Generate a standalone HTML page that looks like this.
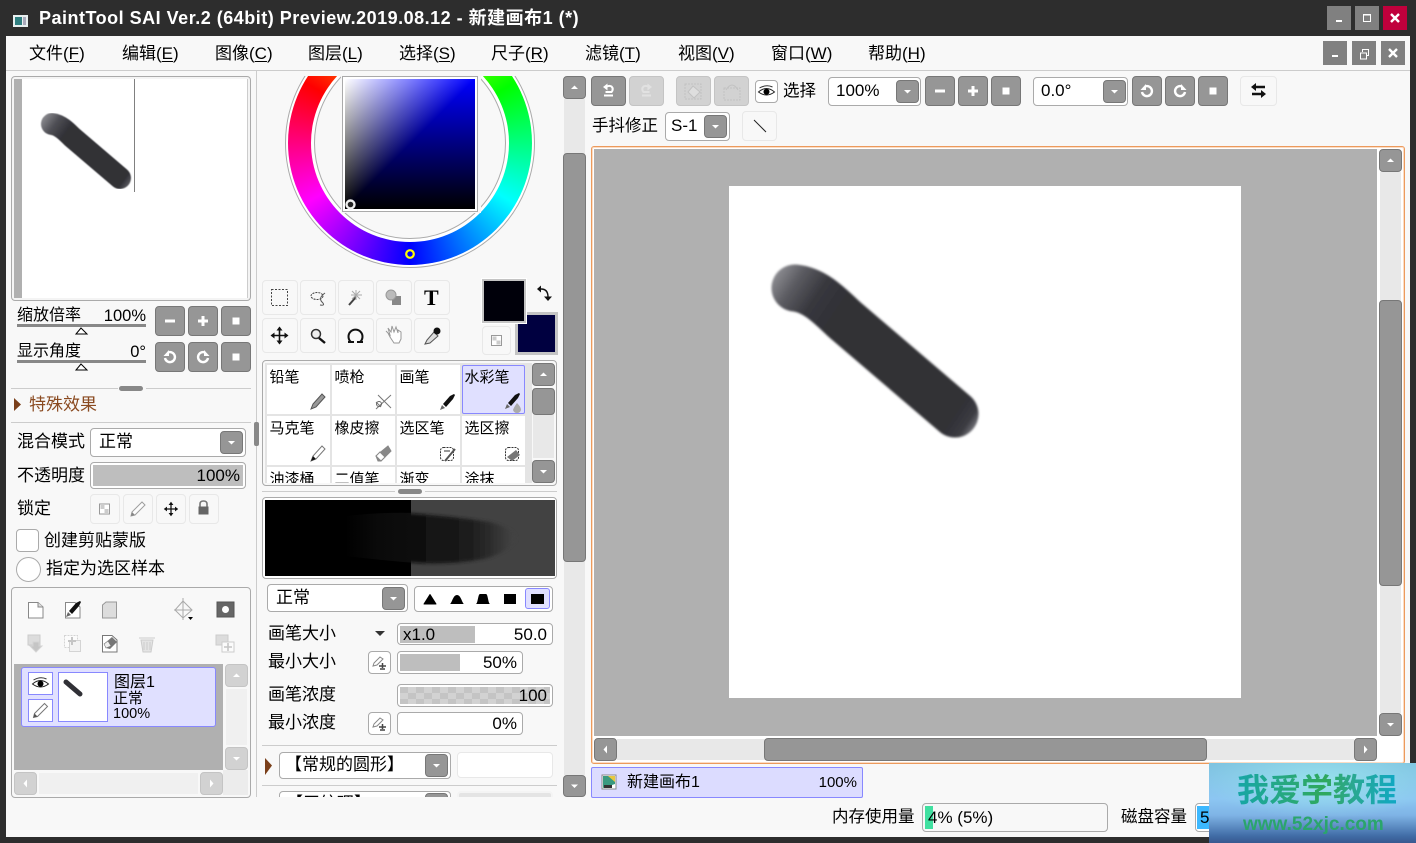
<!DOCTYPE html>
<html lang="zh"><head><meta charset="utf-8"><title>PaintTool SAI</title>
<style>
html,body{margin:0;padding:0;width:1416px;height:843px;overflow:hidden;background:#2d2d2d}
body{position:relative;font-family:"Liberation Sans","Noto Sans CJK SC",sans-serif;font-size:17px;color:#000}
div,span.t{position:absolute;box-sizing:border-box}
.t{white-space:nowrap;line-height:20px;height:20px;margin-top:1px}
.m{top:43px;font-size:17px}
.m u{text-underline-offset:2px}
.b{background:#969696;border:1px solid #777;border-radius:4px}
.d{background:#d2d2d2;border:1px solid #c4c4c4;border-radius:4px}
.l{background:#f8f8f8;border:1px solid #e8e8e8;border-radius:4px}
.f{background:#fff;border:1px solid #aaa;border-radius:4px}
.tr{background:#e8e8e8}
.h{background:#ccc;height:1px}
.c{background:#fff}
.c span{position:absolute;left:2.5px;top:3px;font-size:15px;line-height:20px;white-space:nowrap}
.w{background:#808080}
#ic{position:absolute;left:0;top:0;width:1416px;height:843px;z-index:5;pointer-events:none}
</style></head><body>

<div style="left:6px;top:36px;width:1404px;height:801px;background:#f8f8f8"></div>

<!-- title -->
<span class="t" style="left:39px;top:7px;color:#fff;font-weight:bold;font-size:18px;letter-spacing:.5px">PaintTool SAI Ver.2 (64bit) Preview.2019.08.12 - 新建画布1 (*)</span>
<div class="w" style="left:1327px;top:6px;width:24px;height:24px"></div>
<div class="w" style="left:1355px;top:6px;width:24px;height:24px"></div>
<div style="left:1383px;top:6px;width:24px;height:24px;background:#c0003c"></div>

<!-- menu -->
<span class="t m" style="left:29px">文件(<u>F</u>)</span>
<span class="t m" style="left:122px">编辑(<u>E</u>)</span>
<span class="t m" style="left:215px">图像(<u>C</u>)</span>
<span class="t m" style="left:308px">图层(<u>L</u>)</span>
<span class="t m" style="left:399px">选择(<u>S</u>)</span>
<span class="t m" style="left:491px">尺子(<u>R</u>)</span>
<span class="t m" style="left:585px">滤镜(<u>T</u>)</span>
<span class="t m" style="left:678px">视图(<u>V</u>)</span>
<span class="t m" style="left:771px">窗口(<u>W</u>)</span>
<span class="t m" style="left:868px">帮助(<u>H</u>)</span>
<div class="w" style="left:1323px;top:41px;width:24px;height:24px"></div>
<div class="w" style="left:1352px;top:41px;width:24px;height:24px"></div>
<div class="w" style="left:1381px;top:41px;width:24px;height:24px"></div>
<div class="h" style="left:6px;top:70px;width:1404px;height:1px"></div>
<div style="left:256px;top:71px;width:1px;height:726px;background:#ccc"></div>
<div style="left:254px;top:422px;width:5px;height:24px;background:#888;border-radius:2px"></div>

<!-- navigator -->
<div style="left:11px;top:76px;width:240px;height:225px;background:#fff;border:1px solid #aaa;border-radius:4px;box-shadow:inset 0 0 0 2px #f4f4f4"></div>
<div style="left:14px;top:79px;width:8px;height:219px;background:#b0b0b0"></div>
<div style="left:134px;top:79px;width:1px;height:113px;background:#808080"></div>
<div style="left:247px;top:79px;width:1px;height:219px;background:#ccc"></div>

<span class="t" style="left:17px;top:305px;font-size:16px">缩放倍率</span>
<span class="t" style="right:1270px;top:305px;font-size:16.5px">100%</span>
<div style="left:17px;top:324px;width:129px;height:3px;background:#888"></div>
<span class="t" style="left:17px;top:341px;font-size:16px">显示角度</span>
<span class="t" style="right:1270px;top:341px;font-size:16.5px">0°</span>
<div style="left:17px;top:360px;width:129px;height:3px;background:#888"></div>

<div class="b" style="left:155px;top:306px;width:30px;height:30px"></div>
<div class="b" style="left:188px;top:306px;width:30px;height:30px"></div>
<div class="b" style="left:221px;top:306px;width:30px;height:30px"></div>
<div class="b" style="left:155px;top:342px;width:30px;height:30px"></div>
<div class="b" style="left:188px;top:342px;width:30px;height:30px"></div>
<div class="b" style="left:221px;top:342px;width:30px;height:30px"></div>

<div class="h" style="left:11px;top:388px;width:107px"></div>
<div class="h" style="left:146px;top:388px;width:105px"></div>
<div style="left:119px;top:386px;width:24px;height:5px;background:#888;border-radius:3px"></div>
<span class="t" style="left:29px;top:394px;color:#8a4a20">特殊效果</span>
<div class="h" style="left:11px;top:422px;width:240px"></div>

<span class="t" style="left:17px;top:431px">混合模式</span>
<div class="f" style="left:90px;top:428px;width:156px;height:29px"></div>
<span class="t" style="left:99px;top:431px">正常</span>
<div class="b" style="left:220px;top:431px;width:23px;height:23px"></div>

<span class="t" style="left:17px;top:465px">不透明度</span>
<div class="f" style="left:90px;top:462px;width:156px;height:27px"></div>
<div style="left:93px;top:465px;width:150px;height:21px;background:#bebebe"></div>
<span class="t" style="right:1176px;top:465px">100%</span>

<span class="t" style="left:17px;top:498px">锁定</span>
<div class="l" style="left:90px;top:494px;width:30px;height:30px"></div>
<div class="l" style="left:123px;top:494px;width:30px;height:30px"></div>
<div class="l" style="left:156px;top:494px;width:30px;height:30px"></div>
<div class="l" style="left:189px;top:494px;width:30px;height:30px"></div>

<div class="f" style="left:16px;top:529px;width:23px;height:23px"></div>
<span class="t" style="left:44px;top:530px">创建剪贴蒙版</span>
<div class="f" style="left:16px;top:557px;width:25px;height:25px;border-radius:50%"></div>
<span class="t" style="left:46px;top:558px">指定为选区样本</span>

<!-- layer panel -->
<div style="left:11px;top:587px;width:240px;height:211px;border:1px solid #aaa;border-radius:4px"></div>
<div style="left:14px;top:664px;width:209px;height:106px;background:#b0b0b0"></div>
<div style="left:21px;top:667px;width:195px;height:60px;background:#e0e0ff;border:1px solid #8888ff;border-radius:3px"></div>
<div style="left:28px;top:672px;width:25px;height:23px;background:#fff;border:1px solid #8888ff"></div>
<div style="left:28px;top:699px;width:25px;height:23px;background:#fff;border:1px solid #8888ff"></div>
<div style="left:58px;top:672px;width:50px;height:50px;background:#fff;border:1px solid #8888ff"></div>
<span class="t" style="left:114px;top:672px;font-size:16px">图层1</span>
<span class="t" style="left:113px;top:688px;font-size:15px">正常</span>
<span class="t" style="left:113px;top:703px;font-size:14.5px">100%</span>
<div class="d" style="left:225px;top:664px;width:23px;height:23px"></div>
<div style="left:226px;top:689px;width:21px;height:56px;background:#f0f0f0"></div>
<div class="d" style="left:225px;top:747px;width:23px;height:23px"></div>
<div class="d" style="left:14px;top:772px;width:23px;height:23px"></div>
<div style="left:39px;top:773px;width:159px;height:21px;background:#f0f0f0"></div>
<div class="d" style="left:200px;top:772px;width:23px;height:23px"></div>
<div style="left:223px;top:770px;width:25px;height:25px;background:#ececec"></div>

<!-- colour wheel -->
<div style="left:260px;top:76px;width:300px;height:200px;overflow:hidden">
  <div style="left:25px;top:-58px;width:250px;height:250px;border-radius:50%;border:1px solid #aaa;background:#fff"></div>
  <div style="left:28px;top:-55px;width:244px;height:244px;border-radius:50%;background:conic-gradient(#ff0 0deg,#0f0 60deg,#0ff 120deg,#00f 180deg,#f0f 240deg,#f00 300deg,#ff0 360deg)"></div>
  <div style="left:53px;top:-30px;width:194px;height:194px;border-radius:50%;background:#fff;box-shadow:0 0 0 2px #fff"></div>
  <div style="left:54px;top:-29px;width:192px;height:192px;border-radius:50%;background:#f8f8f8;border:1px solid #aaa"></div>
  <div style="left:81px;top:-2px;width:140px;height:139px;background:#f8f8f8"></div>
</div>
<div style="left:342px;top:76px;width:136px;height:136px;background:#fff;border:1px solid #aaa"></div>
<div style="left:345px;top:79px;width:130px;height:130px;background:linear-gradient(135deg,#fff 0,#000 50%),linear-gradient(to bottom,#00f,#000);background-blend-mode:lighten"></div>

<!-- tools -->
<div class="l" style="left:262px;top:280px;width:36px;height:35px"></div>
<div class="l" style="left:300px;top:280px;width:36px;height:35px"></div>
<div class="l" style="left:338px;top:280px;width:36px;height:35px"></div>
<div class="l" style="left:376px;top:280px;width:36px;height:35px"></div>
<div class="l" style="left:414px;top:280px;width:36px;height:35px"></div>
<div class="l" style="left:262px;top:318px;width:36px;height:35px"></div>
<div class="l" style="left:300px;top:318px;width:36px;height:35px"></div>
<div class="l" style="left:338px;top:318px;width:36px;height:35px"></div>
<div class="l" style="left:376px;top:318px;width:36px;height:35px"></div>
<div class="l" style="left:414px;top:318px;width:36px;height:35px"></div>
<span class="t" style="left:424px;top:287px;font-family:'Liberation Serif',serif;font-weight:bold;font-size:22px">T</span>

<div style="left:515px;top:312px;width:43px;height:43px;background:#000040;border:3px solid #c4c4c4"></div>
<div style="left:482px;top:279px;width:44px;height:44px;background:#00000a;border:2px solid #c4c4c4;box-shadow:0 0 0 1px #fff"></div>
<div class="l" style="left:482px;top:326px;width:29px;height:29px"></div>

<!-- brushes -->
<div style="left:262px;top:360px;width:295px;height:126px;border:1px solid #aaa;border-radius:4px"></div>
<div style="left:265px;top:363px;width:267px;height:120px;background:#e4e4e4;overflow:hidden">
  <div class="c" style="left:2px;top:2px;width:63px;height:49px"><span>铅笔</span></div>
  <div class="c" style="left:67px;top:2px;width:63px;height:49px"><span>喷枪</span></div>
  <div class="c" style="left:132px;top:2px;width:63px;height:49px"><span>画笔</span></div>
  <div class="c" style="left:197px;top:2px;width:63px;height:49px;background:#e0e0ff;border:1px solid #8888ff;border-radius:2px"><span style="left:1.500px;top:2px">水彩笔</span></div>
  <div class="c" style="left:2px;top:53px;width:63px;height:49px"><span>马克笔</span></div>
  <div class="c" style="left:67px;top:53px;width:63px;height:49px"><span>橡皮擦</span></div>
  <div class="c" style="left:132px;top:53px;width:63px;height:49px"><span>选区笔</span></div>
  <div class="c" style="left:197px;top:53px;width:63px;height:49px"><span>选区擦</span></div>
  <div class="c" style="left:2px;top:104px;width:63px;height:49px"><span>油漆桶</span></div>
  <div class="c" style="left:67px;top:104px;width:63px;height:49px"><span>二值笔</span></div>
  <div class="c" style="left:132px;top:104px;width:63px;height:49px"><span>渐变</span></div>
  <div class="c" style="left:197px;top:104px;width:63px;height:49px"><span>涂抹</span></div>
</div>
<div class="b" style="left:532px;top:363px;width:23px;height:23px"></div>
<div class="tr" style="left:533px;top:388px;width:21px;height:70px"></div>
<div class="b" style="left:532px;top:388px;width:23px;height:27px"></div>
<div class="b" style="left:532px;top:460px;width:23px;height:23px"></div>

<div class="h" style="left:262px;top:491px;width:133px"></div>
<div class="h" style="left:425px;top:491px;width:132px"></div>
<div style="left:398px;top:489px;width:24px;height:5px;background:#888;border-radius:3px"></div>

<!-- brush preview -->
<div style="left:262px;top:497px;width:295px;height:82px;border:1px solid #aaa;border-radius:4px;background:#fff"></div>
<svg style="position:absolute;left:265px;top:500px" width="290" height="76" viewBox="265 500 290 76">
  <defs>
    <filter id="bl" x="-20%" y="-30%" width="140%" height="160%"><feGaussianBlur stdDeviation="1.500"/></filter>
    <linearGradient id="pgl" gradientUnits="userSpaceOnUse" x1="345" y1="0" x2="411" y2="0">
      <stop offset="0" stop-color="#000"/><stop offset=".5" stop-color="#0a0a0a"/><stop offset="1" stop-color="#0d0d0d"/>
    </linearGradient>
    <linearGradient id="pgr" gradientUnits="userSpaceOnUse" x1="411" y1="0" x2="512" y2="0">
      <stop offset="0" stop-color="#0f0f0f"/><stop offset=".35" stop-color="#151515"/><stop offset=".6" stop-color="#1e1e1e"/><stop offset=".78" stop-color="#2c2c2c"/><stop offset="1" stop-color="#424242"/>
    </linearGradient>
    <clipPath id="cl"><rect x="265" y="500" width="146" height="76"/></clipPath>
    <clipPath id="cr"><rect x="411" y="500" width="144" height="76"/></clipPath>
  </defs>
  <rect x="265" y="500" width="146" height="76" fill="#000"/>
  <rect x="411" y="500" width="144" height="76" fill="#424242"/>
  <path clip-path="url(#cl)" fill="url(#pgl)" d="M345 516Q380 512 415 513V563Q380 560 345 556Z"/>
  <g clip-path="url(#cr)"><path filter="url(#bl)" fill="url(#pgr)" d="M405 513Q450 516 490 522Q518 530 516 540Q505 554 484 559Q445 566 405 562Z"/></g>
</svg>

<div class="f" style="left:267px;top:584px;width:141px;height:28px"></div>
<span class="t" style="left:276px;top:587px">正常</span>
<div class="b" style="left:382px;top:587px;width:23px;height:23px"></div>
<div class="f" style="left:414px;top:586px;width:139px;height:26px"></div>
<div style="left:525px;top:588px;width:25px;height:21px;background:#e0e0ff;border:1px solid #8888ff;border-radius:3px"></div>

<span class="t" style="left:268px;top:623px">画笔大小</span>
<div class="f" style="left:397px;top:623px;width:156px;height:22px"></div>
<div style="left:400px;top:626px;width:75px;height:17px;background:#bebebe"></div>
<span class="t" style="left:403px;top:624px">x1.0</span>
<span class="t" style="right:869px;top:624px">50.0</span>

<span class="t" style="left:268px;top:651px">最小大小</span>
<div class="f" style="left:368px;top:651px;width:23px;height:23px"></div>
<div class="f" style="left:397px;top:651px;width:126px;height:23px"></div>
<div style="left:400px;top:654px;width:60px;height:17px;background:#bebebe"></div>
<span class="t" style="right:899px;top:652px">50%</span>

<span class="t" style="left:268px;top:684px">画笔浓度</span>
<div class="f" style="left:397px;top:684px;width:156px;height:23px"></div>
<div style="left:400px;top:687px;width:150px;height:17px;background-color:#c4c4c4;background-image:conic-gradient(#d2d2d2 25%,transparent 0 50%,#d2d2d2 0 75%,transparent 0);background-size:16px 12px"></div>
<span class="t" style="right:869px;top:685px">100</span>

<span class="t" style="left:268px;top:712px">最小浓度</span>
<div class="f" style="left:368px;top:712px;width:23px;height:23px"></div>
<div class="f" style="left:397px;top:712px;width:126px;height:23px"></div>
<span class="t" style="right:899px;top:713px">0%</span>

<div class="h" style="left:262px;top:745px;width:295px"></div>
<div class="f" style="left:279px;top:752px;width:172px;height:27px"></div>
<span class="t" style="left:285px;top:754px;font-size:17px">【常规的圆形】</span>
<div class="b" style="left:425px;top:754px;width:23px;height:23px"></div>
<div class="l" style="left:457px;top:752px;width:96px;height:26px;background:#fff"></div>
<div class="h" style="left:262px;top:785px;width:295px"></div>
<div style="left:262px;top:786px;width:295px;height:11px;overflow:hidden">
  <div class="f" style="left:17px;top:5px;width:172px;height:27px"></div>
  <span class="t" style="left:24px;top:7px;font-size:17px">【无纹理】</span>
  <div class="b" style="left:163px;top:7px;width:23px;height:23px"></div>
  <div class="l" style="left:195px;top:5px;width:96px;height:26px;background:#e4e4e4;border:2px solid #f4f4f4"></div>
</div>

<!-- middle scrollbar -->
<div class="tr" style="left:564px;top:99px;width:21px;height:676px"></div>
<div class="b" style="left:563px;top:76px;width:23px;height:23px"></div>
<div class="b" style="left:563px;top:153px;width:23px;height:409px"></div>
<div class="b" style="left:563px;top:775px;width:23px;height:22px"></div>

<!-- top toolbar -->
<div class="b" style="left:591px;top:76px;width:35px;height:30px"></div>
<div class="d" style="left:629px;top:76px;width:35px;height:30px"></div>
<div class="d" style="left:676px;top:76px;width:35px;height:30px"></div>
<div class="d" style="left:714px;top:76px;width:35px;height:30px"></div>
<div class="f" style="left:755px;top:80px;width:23px;height:23px"></div>
<span class="t" style="left:783px;top:80px;font-size:16.5px">选择</span>
<div class="f" style="left:828px;top:77px;width:93px;height:29px"></div>
<span class="t" style="left:836px;top:80px">100%</span>
<div class="b" style="left:896px;top:80px;width:23px;height:23px"></div>
<div class="b" style="left:925px;top:76px;width:30px;height:30px"></div>
<div class="b" style="left:958px;top:76px;width:30px;height:30px"></div>
<div class="b" style="left:991px;top:76px;width:30px;height:30px"></div>
<div class="f" style="left:1033px;top:77px;width:95px;height:29px"></div>
<span class="t" style="left:1041px;top:80px">0.0°</span>
<div class="b" style="left:1103px;top:80px;width:23px;height:23px"></div>
<div class="b" style="left:1132px;top:76px;width:30px;height:30px"></div>
<div class="b" style="left:1165px;top:76px;width:30px;height:30px"></div>
<div class="b" style="left:1198px;top:76px;width:30px;height:30px"></div>
<div class="l" style="left:1240px;top:76px;width:37px;height:30px"></div>

<span class="t" style="left:592px;top:115px;font-size:16.5px">手抖修正</span>
<div class="f" style="left:665px;top:112px;width:65px;height:29px"></div>
<span class="t" style="left:671px;top:115px">S-1</span>
<div class="b" style="left:704px;top:115px;width:23px;height:23px"></div>
<div class="l" style="left:742px;top:111px;width:35px;height:30px"></div>

<!-- canvas -->
<div style="left:591px;top:146px;width:814px;height:618px;border:1px solid #ec9a5c;border-radius:3px;background:#fff;box-shadow:inset 0 0 0 1px #fbdcc4"></div>
<div style="left:594px;top:149px;width:783px;height:587px;background:#b0b0b0"></div>
<div style="left:729px;top:186px;width:512px;height:512px;background:#fff"></div>
<div class="tr" style="left:1380px;top:172px;width:21px;height:541px"></div>
<div class="b" style="left:1379px;top:149px;width:23px;height:23px"></div>
<div class="b" style="left:1379px;top:300px;width:23px;height:286px"></div>
<div class="b" style="left:1379px;top:713px;width:23px;height:23px"></div>
<div class="tr" style="left:617px;top:739px;width:737px;height:21px"></div>
<div class="b" style="left:594px;top:738px;width:23px;height:23px"></div>
<div class="b" style="left:764px;top:738px;width:443px;height:23px"></div>
<div class="b" style="left:1354px;top:738px;width:23px;height:23px"></div>

<!-- tab -->
<div style="left:591px;top:767px;width:272px;height:31px;background:#dcdcff;border:1px solid #8888ff;border-radius:2px"></div>
<span class="t" style="left:627px;top:772px;font-size:16px">新建画布1</span>
<span class="t" style="right:559px;top:772px;font-size:15px">100%</span>

<!-- status -->
<span class="t" style="left:832px;top:806px;font-size:16.5px">内存使用量</span>
<div class="f" style="left:922px;top:803px;width:186px;height:29px;background:#f8f8f8"></div>
<div style="left:925px;top:806px;width:8px;height:23px;background:#40e0a0"></div>
<span class="t" style="left:928px;top:807px">4% (5%)</span>
<span class="t" style="left:1121px;top:806px;font-size:16.5px">磁盘容量</span>
<div class="f" style="left:1195px;top:803px;width:60px;height:29px"></div>
<div style="left:1197px;top:806px;width:30px;height:23px;background:#3cb8ff"></div>
<span class="t" style="left:1200px;top:807px">5</span>

<!-- icon overlay -->
<svg id="ic" viewBox="0 0 1416 843">
<defs>
  <g id="min"><rect x="-5" y="-1.5" width="10" height="3" fill="#fff"/></g>
  <g id="pls"><path d="M-5-1.5H-1.5V-5H1.5V-1.5H5V1.5H1.5V5H-1.5V1.5H-5Z" fill="#fff"/></g>
  <g id="stp"><rect x="-3.5" y="-3.5" width="7" height="7" fill="#fff"/></g>
  <g id="ccw"><path d="M-2-4.5A5 5 0 1 1-5 1" fill="none" stroke="#fff" stroke-width="2.4"/><path d="M-6.5-1H-1V-7Z" fill="#fff"/></g>
  <g id="cw"><path d="M2-4.5A5 5 0 1 0 5 1" fill="none" stroke="#fff" stroke-width="2.4"/><path d="M6.5-1H1V-7Z" fill="#fff"/></g>
  <path id="dn" d="M-3.5-1.5H3.5L0 2Z" fill="#fff"/>
  <path id="up" d="M-3.5 1.5H3.5L0-2Z" fill="#fff"/>
  <path id="lf" d="M1.5-4V4L-2 0Z" fill="#fff"/>
  <path id="rt" d="M-1.5-4V4L2 0Z" fill="#fff"/>
  <g id="eye"><path d="M-8 0Q0-7 8 0Q0 6-8 0Z" fill="#fff" stroke="#222" stroke-width="1"/><circle r="3" cy="-.3" fill="#000"/><path d="M-7-4Q0-8 6-5" fill="none" stroke="#333"/></g>
  <g id="pen"><path d="M-7 7L-6 3L4-7L7-4L-3 6Z" fill="#fff" stroke="#777"/><path d="M-7 7L-6 3L-3 6Z" fill="#555"/></g>
  <g id="brush"><path d="M-8 8L-6 3L-3 6Z" fill="#666"/><path d="M-5 2L2-6L6-8L7-7L5-3L-2 5Z" fill="#111"/></g>
  <g id="mv"><path d="M0-8V8M-8 0H8" stroke="#111" stroke-width="1.6"/><path d="M-3-5L0-9L3-5ZM-3 5L0 9L3 5ZM-5-3L-9 0L-5 3ZM5-3L9 0L5 3Z" fill="#111"/></g>
  <g id="chk"><rect x="-5" y="-5" width="10" height="10" fill="#fff" stroke="#999"/><path d="M-4-4H0V0H-4ZM0 0H4V4H0Z" fill="#ccc"/></g>
  <g id="pa"><path d="M-5 4L-4 1L2-5L5-3L-1 3Z" fill="#fff" stroke="#888"/><path d="M1 4H8M4.5 1V6M2 7H7" stroke="#444" stroke-width="1.5"/></g>
</defs>

<!-- title icon -->
<rect x="13" y="15" width="15" height="12" fill="#e8f0f0"/><rect x="15" y="17" width="7" height="8" fill="#2f7f80"/><rect x="23" y="17" width="3" height="8" fill="#aab"/>
<!-- window -->
<rect x="1336" y="20" width="6" height="2" fill="#fff"/>
<rect x="1363.500" y="14.500" width="7" height="7" fill="none" stroke="#fff" stroke-width="1"/><rect x="1363" y="14" width="8" height="1.500" fill="#fff"/>
<path d="M1391 14L1399 22M1399 14L1391 22" stroke="#fff" stroke-width="2.4"/>
<rect x="1332" y="55" width="6" height="2" fill="#fff"/>
<rect x="1360.500" y="53" width="6" height="6" fill="none" stroke="#fff"/><path d="M1362.500 52V49.500H1368.500V55.500H1366" fill="none" stroke="#fff"/>
<path d="M1389 49L1397 57M1397 49L1389 57" stroke="#fff" stroke-width="2.4"/>

<!-- navigator & canvas strokes -->
<defs>
 <linearGradient id="sg" gradientUnits="userSpaceOnUse" x1="771" y1="282" x2="979" y2="424"><stop offset="0" stop-color="#8a8a8f"/><stop offset=".08" stop-color="#5c5c62"/><stop offset=".18" stop-color="#38383e"/><stop offset=".28" stop-color="#303036"/><stop offset=".9" stop-color="#303036"/><stop offset=".96" stop-color="#3c3c42"/><stop offset="1" stop-color="#7c7c82"/></linearGradient>
 <linearGradient id="ng" gradientUnits="userSpaceOnUse" x1="41" y1="120" x2="131" y2="185"><stop offset="0" stop-color="#8a8a8f"/><stop offset=".12" stop-color="#505056"/><stop offset=".25" stop-color="#303036"/><stop offset=".92" stop-color="#303036"/><stop offset="1" stop-color="#66666c"/></linearGradient>
 <filter id="b1" x="-20%" y="-20%" width="140%" height="140%"><feGaussianBlur stdDeviation="1"/></filter>
 <filter id="b2" x="-20%" y="-20%" width="140%" height="140%"><feGaussianBlur stdDeviation=".6"/></filter>
</defs>
<path d="M795 288C815 290 830 306 845 320L955 414" fill="none" stroke="url(#sg)" stroke-width="47" stroke-linecap="round" filter="url(#b1)"/>
<path d="M52 124C60 125 66 131 72 137L120 178" fill="none" stroke="url(#ng)" stroke-width="22" stroke-linecap="round" filter="url(#b2)"/>

<!-- sliders -->
<path d="M81 328L76 334H87Z" fill="#fff" stroke="#000"/><path d="M81 364L76 370H87Z" fill="#fff" stroke="#000"/>
<use href="#min" x="170" y="321"/><use href="#pls" x="203" y="321"/><use href="#stp" x="236" y="321"/>
<use href="#ccw" x="170" y="357"/><use href="#cw" x="203" y="357"/><use href="#stp" x="236" y="357"/>
<path d="M14 398L21 404.500L14 411Z" fill="#7a3f1a"/>
<use href="#dn" x="231.500" y="442.500"/>
<use href="#chk" x="104.500" y="509"/>
<use href="#pen" x="138" y="509" opacity=".7"/>
<use href="#mv" transform="translate(171 509) scale(.8)"/>
<path d="M200 507V504Q200 501 203.500 501Q207 501 207 504V507" fill="none" stroke="#777" stroke-width="1.6"/><rect x="198.500" y="506.500" width="10" height="8" fill="#666"/>

<!-- layer icons -->
<path d="M28.500 602.500H38L43 607V618H28.500Z" fill="#fff" stroke="#888"/><path d="M38 602.500V607H43" fill="#ddd" stroke="#888"/>
<path d="M65.500 602.500H75L80 607V618H65.500Z" fill="#fff" stroke="#888"/><use href="#brush" x="74" y="609"/>
<path d="M102.500 605L106 602H116.500V618H102.500Z" fill="#ddd" stroke="#999"/>
<path d="M183 601L175 610L183 618L192 610Z M183 598V620M174 610H192" fill="none" stroke="#aaa"/><path d="M188 617H193L190.500 620Z" fill="#000"/>
<rect x="217" y="602" width="17" height="15" fill="#666" stroke="#555"/><circle cx="225.500" cy="609.500" r="3.500" fill="#fff"/>
<g opacity=".45">
 <rect x="28" y="635" width="12" height="10" fill="#bbb" stroke="#999"/><path d="M33 642H39V646H42L36 652L30 646H33Z" fill="#888" stroke="#aaa"/>
 <rect x="64.500" y="635.500" width="13" height="12" fill="#fff" stroke="#aaa" stroke-dasharray="2 1"/><rect x="69.500" y="640.500" width="11" height="11" fill="#eee" stroke="#aaa"/><path d="M68 641H76M72 637V645" stroke="#888" stroke-width="2"/>
 <path d="M141 640H153L151 652H143ZM139 638H155" fill="#ccc" stroke="#999"/><path d="M144 642V650M147 642V650M150 642V650" stroke="#999"/>
 <rect x="216" y="635" width="12" height="10" fill="#bbb" stroke="#999"/><rect x="222" y="642" width="12" height="10" fill="#fff" stroke="#999"/><path d="M224 647H232M228 643V651" stroke="#888" stroke-width="1.6"/>
</g>
<path d="M102.500 635.500H112L117 640V652H102.500Z" fill="#fff" stroke="#777"/><path d="M106 648L104 644L112 637L117 642L110 649Z" fill="#777"/><path d="M106 648L104 644L108 641L111 646Z" fill="#eee" stroke="#777" stroke-width=".6"/>
<use href="#eye" x="40.500" y="684"/><use href="#pen" x="40.500" y="710.500"/>
<path d="M66 682L80 694" stroke="#303036" stroke-width="5" stroke-linecap="round"/>
<use href="#up" x="236.500" y="675.500"/><use href="#dn" x="236.500" y="758.500"/><use href="#lf" x="25.500" y="783.500"/><use href="#rt" x="211.500" y="783.500"/>

<!-- wheel markers -->
<circle cx="410" cy="254" r="3.800" fill="none" stroke="#ff0" stroke-width="2.200"/>
<circle cx="350.500" cy="204.500" r="4" fill="#222" stroke="#eee" stroke-width="2.400"/>

<!-- tool icons -->
<rect x="271.500" y="289.500" width="16" height="16" fill="none" stroke="#444" stroke-dasharray="2 1.500"/>
<ellipse cx="317" cy="296" rx="6" ry="3.500" fill="none" stroke="#444" stroke-dasharray="2 1"/><path d="M325 293Q318 298 322 302Q326 306 320 305" fill="none" stroke="#555"/>
<path d="M349 305L356 297" stroke="#444" stroke-width="2"/><path d="M356 290V300M351 295H362M352 291L360 299M360 291L352 299" stroke="#aaa"/>
<rect x="392" y="296" width="9" height="9" fill="#888"/><circle cx="391" cy="295" r="5" fill="#bbb" stroke="#999"/>
<use href="#mv" x="279.500" y="335.500"/>
<circle cx="316" cy="334" r="4.500" fill="#eee" stroke="#333" stroke-width="1.500"/><path d="M319 338L325 343" stroke="#111" stroke-width="2.400"/>
<path d="M351 342A7 7 0 1 1 360 342" fill="none" stroke="#111" stroke-width="2"/><path d="M348 342H354M357 342H363" stroke="#111" stroke-width="2"/>
<path d="M386 331L388 333L390 337L394 343H399L401 339V332L398 330V333L396 327L394 332L392 326L391 332L388 328L390 335Z" fill="#fff" stroke="#999"/>
<path d="M425 344L427 340L434 332L438 336L430 343Z" fill="#ddd" stroke="#555"/><circle cx="437" cy="331" r="3.500" fill="#111"/>
<path d="M541 289Q548 289 548 297" fill="none" stroke="#111" stroke-width="1.400"/><path d="M541 285.500V292.500L537 289Z" fill="#111"/><path d="M544 296.500H552L548 301Z" fill="#111"/>
<use href="#chk" x="496.500" y="340.500"/>

<!-- brush icons -->
<path d="M311 409L313 404L322 394L325 397L316 407Z" fill="#999" stroke="#555"/>
<path d="M376 402L381 407M391 395L376 409M378 395L391 408" stroke="#777"/><circle cx="379" cy="404" r="2.500" fill="none" stroke="#666"/>
<use href="#brush" x="448" y="402"/>
<use href="#brush" x="513" y="401"/><path d="M517 403Q521 407 521 410Q520 413 517 413Q514 413 513 410Q514 407 517 403Z" fill="#aaa"/>
<path d="M311 461L313 456L322 446L325 449L316 459Z" fill="#fff" stroke="#777"/><path d="M311 461L313 456L316 459Z" fill="#111"/>
<path d="M376 456L388 446L391 451L381 461H378Z" fill="#888" stroke="#888"/><path d="M376 456L381 461L385 457L380 452Z" fill="#fff" stroke="#888"/>
<rect x="440.500" y="447.500" width="13" height="13" rx="3" fill="none" stroke="#333" stroke-dasharray="2 1"/><path d="M445 461L455 449" stroke="#555" stroke-width="2"/><path d="M444 451H450" stroke="#333"/>
<rect x="505.500" y="447.500" width="13" height="13" rx="3" fill="none" stroke="#333" stroke-dasharray="2 1"/><path d="M507 457L516 450L520 455L512 461Z" fill="#777"/>

<!-- brush scroll -->
<use href="#up" x="543.500" y="374.500"/><use href="#dn" x="543.500" y="471.500"/>
<use href="#dn" x="393.500" y="598.500"/>
<path d="M424 604L430 594.500L436 604Z" fill="#000" stroke="#000" stroke-linejoin="round"/>
<path d="M450 604C452 603 453 595 457 595C461 595 462 603 464 604Z" fill="#000"/>
<path d="M476 604C478 603 478 594 480 594H486C488 594 488 603 490 604Z" fill="#000"/>
<rect x="504" y="594" width="12" height="10" fill="#000"/><rect x="531" y="594" width="13" height="10" fill="#000"/>
<path d="M375 631H385L380 636Z" fill="#333"/>
<use href="#pa" x="378" y="662"/><use href="#pa" x="378" y="723"/>
<path d="M265 758L272 765.500L265 775Z" fill="#7a3f1a"/>
<use href="#dn" x="436.500" y="765.500"/>

<!-- mid scroll -->
<use href="#up" x="574.500" y="87.500"/><use href="#dn" x="574.500" y="786"/>

<!-- toolbar icons -->
<path d="M606 87Q609 85 611.500 86.500Q614 89 611.500 92H605.500" fill="none" stroke="#fff" stroke-width="2"/><path d="M603 87L607.500 83.500V90.500Z" fill="#fff"/><path d="M604 95.500H613" stroke="#fff" stroke-width="2"/>
<g opacity=".7"><path d="M649 87Q646 85 643.500 86.500Q641 89 643.500 92H649.500" fill="none" stroke="#e8e8e8" stroke-width="2"/><path d="M652 87L647.500 83.500V90.500Z" fill="#e8e8e8"/><path d="M642 95.500H651" stroke="#e8e8e8" stroke-width="2"/>
<rect x="685" y="84" width="16" height="15" fill="none" stroke="#bbb" stroke-dasharray="2 1"/><path d="M693 86L700 92L694 98L688 92Z" fill="#e4e4e4" stroke="#bbb"/>
<rect x="724" y="88" width="16" height="12" fill="none" stroke="#bbb" stroke-dasharray="2 1"/><path d="M726 90Q732 80 738 90" fill="none" stroke="#bbb"/></g>
<use href="#eye" x="766.500" y="92"/>
<use href="#dn" x="907.500" y="91.500"/>
<use href="#min" x="940" y="91"/><use href="#pls" x="973" y="91"/><use href="#stp" x="1006" y="91"/>
<use href="#dn" x="1114.500" y="91.500"/>
<use href="#ccw" x="1147" y="91"/><use href="#cw" x="1180" y="91"/><use href="#stp" x="1213" y="91"/>
<path d="M1255 87H1265M1252 94H1262" stroke="#111" stroke-width="2.400"/><path d="M1256 83V91L1251 87ZM1261 90V98L1266 94Z" fill="#111"/>
<use href="#dn" x="715.500" y="126.500"/>
<path d="M754 120L766 132" stroke="#222" stroke-width="1"/>

<!-- canvas scroll -->
<use href="#up" x="1390.500" y="160.500"/><use href="#dn" x="1390.500" y="724.500"/><use href="#lf" x="605.500" y="749.500"/><use href="#rt" x="1365.500" y="749.500"/>

<!-- tab icon -->
<rect x="602" y="775" width="14" height="14" fill="#fff" stroke="#888"/><path d="M603 776H615V784L603 788Z" fill="#3a9a80"/><path d="M608 776H615V782Z" fill="#e8c840"/><rect x="604" y="785" width="8" height="3" fill="#333"/>
</svg>

<!-- watermark -->
<div style="left:1209px;top:763px;width:207px;height:80px;z-index:6;overflow:hidden;background:radial-gradient(ellipse 120px 38px at 55% 22%,#97e0ec 0,rgba(150,210,240,0) 100%),linear-gradient(to bottom,#7fc4e0 0,#8cc6f2 45%,#7fb4e6 65%,#3f6aa4 92%,#38588f 100%)">
  <span class="t" style="left:28px;top:6px;height:36px;line-height:36px;font-size:32px;font-weight:bold;color:transparent;background:linear-gradient(90deg,#16a6a6 0,#26a880 30%,#2fa85c 55%,#2aa890 72%,#10a8c4 100%);-webkit-background-clip:text;background-clip:text;font-family:'Noto Sans CJK SC','WenQuanYi Zen Hei',sans-serif">我爱学教程</span>
  <span class="t" style="left:34px;top:50px;height:22px;line-height:22px;font-size:19px;font-weight:bold;color:#2aa56c">www.52xjc.com</span>
</div>

</body></html>
